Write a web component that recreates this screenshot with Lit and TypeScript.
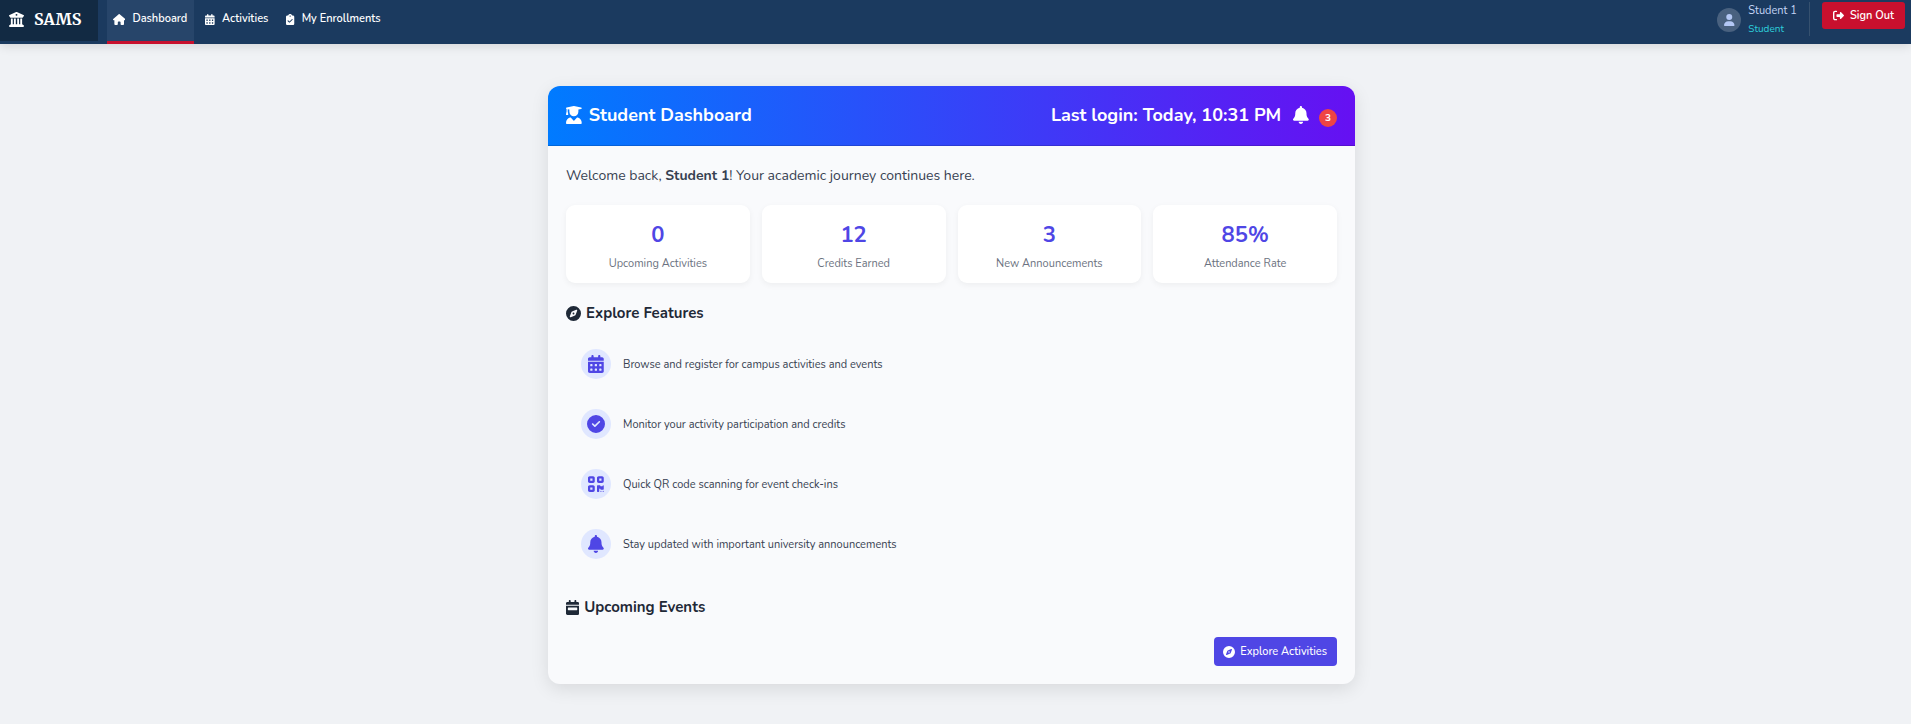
import { LitElement, html, css, svg } from "lit";
import { customElement, property } from "lit/decorators.js";

const ICONS: Record<string, [number, string]> = {
  university: [512, "M243.4 2.6l-224 96c-14 6-21.8 21-18.7 35.8S16.8 160 32 160v8c0 13.3 10.7 24 24 24H456c13.3 0 24-10.7 24-24v-8c15.2 0 28.3-10.7 31.3-25.6s-4.8-29.9-18.7-35.8l-224-96c-8-3.4-17.2-3.4-25.2 0zM128 224H64V420.3c-.6 .3-1.2 .7-1.8 1.1l-48 32c-11.7 7.8-17 22.4-12.9 35.9S17.9 512 32 512H480c14.1 0 26.5-9.2 30.6-22.7s-1.1-28.1-12.9-35.9l-48-32c-.6-.4-1.2-.7-1.8-1.1V224H384V416H344V224H280V416H232V224H168V416H128V224zM256 64a32 32 0 1 1 0 64 32 32 0 1 1 0-64z"],
  home: [576, "M575.8 255.5c0 18-15 32.1-32 32.1h-32l.7 160.2c0 2.7-.2 5.4-.5 8.1V472c0 22.1-17.9 40-40 40H456c-1.1 0-2.2 0-3.3-.1c-1.4 .1-2.8 .1-4.2 .1H416 392c-22.1 0-40-17.9-40-40V448 384c0-17.7-14.3-32-32-32H256c-17.7 0-32 14.3-32 32v64 24c0 22.1-17.9 40-40 40H160 128.1c-1.5 0-3-.1-4.5-.2c-1.2 .1-2.4 .2-3.6 .2H104c-22.1 0-40-17.9-40-40V360c0-.9 0-1.9 .1-2.8V287.6H32c-18 0-32-14-32-32.1c0-9 3-17 10-24L266.4 8c7-7 15-8 22-8s15 2 21 7L564.8 231.5c8 7 12 15 11 24z"],
  calendar: [448, "M128 0c17.7 0 32 14.3 32 32V64H288V32c0-17.7 14.3-32 32-32s32 14.3 32 32V64h48c26.5 0 48 21.5 48 48v48H0V112C0 85.5 21.5 64 48 64H96V32c0-17.7 14.3-32 32-32zM0 192H448V464c0 26.5-21.5 48-48 48H48c-26.5 0-48-21.5-48-48V192zm64 80v32c0 8.8 7.2 16 16 16h32c8.8 0 16-7.2 16-16V272c0-8.8-7.2-16-16-16H80c-8.8 0-16 7.2-16 16zm128 0v32c0 8.8 7.2 16 16 16h32c8.8 0 16-7.2 16-16V272c0-8.8-7.2-16-16-16H208c-8.8 0-16 7.2-16 16zm144-16c-8.8 0-16 7.2-16 16v32c0 8.8 7.2 16 16 16h32c8.8 0 16-7.2 16-16V272c0-8.8-7.2-16-16-16H336zM64 400v32c0 8.8 7.2 16 16 16h32c8.8 0 16-7.2 16-16V400c0-8.8-7.2-16-16-16H80c-8.8 0-16 7.2-16 16zm144-16c-8.8 0-16 7.2-16 16v32c0 8.8 7.2 16 16 16h32c8.8 0 16-7.2 16-16V400c0-8.8-7.2-16-16-16H208zm112 16v32c0 8.8 7.2 16 16 16h32c8.8 0 16-7.2 16-16V400c0-8.8-7.2-16-16-16H336c-8.8 0-16 7.2-16 16z"],
  week: [448, "M128 0c17.7 0 32 14.3 32 32V64H288V32c0-17.7 14.3-32 32-32s32 14.3 32 32V64h48c26.5 0 48 21.5 48 48v48H0V112C0 85.5 21.5 64 48 64H96V32c0-17.7 14.3-32 32-32zM0 192H448V464c0 26.5-21.5 48-48 48H48c-26.5 0-48-21.5-48-48V192zm80 64c-8.8 0-16 7.2-16 16v64c0 8.8 7.2 16 16 16H368c8.8 0 16-7.2 16-16V272c0-8.8-7.2-16-16-16H80z"],
  clipboard: [384, "M192 0c-41.8 0-77.4 26.7-90.5 64H64C28.7 64 0 92.7 0 128V448c0 35.3 28.7 64 64 64H320c35.3 0 64-28.7 64-64V128c0-35.3-28.7-64-64-64H282.5C269.4 26.7 233.8 0 192 0zm0 64a32 32 0 1 1 0 64 32 32 0 1 1 0-64zM305 273L177 401c-9.4 9.4-24.6 9.4-33.9 0L79 337c-9.4-9.4-9.4-24.6 0-33.9s24.6-9.4 33.9 0l47 47L271 239c9.4-9.4 24.6-9.4 33.9 0s9.4 24.6 0 33.9z"],
  user: [448, "M224 256A128 128 0 1 0 224 0a128 128 0 1 0 0 256zm-45.7 48C79.8 304 0 383.8 0 482.3C0 498.7 13.3 512 29.7 512H418.3c16.4 0 29.7-13.3 29.7-29.7C448 383.8 368.2 304 269.7 304H178.3z"],
  signout: [512, "M377.9 105.9L500.7 228.7c7.2 7.2 11.3 17.1 11.3 27.3s-4.1 20.1-11.3 27.3L377.9 406.1c-6.4 6.4-15 9.9-24 9.9c-18.7 0-33.9-15.2-33.9-33.9l0-62.1-128 0c-17.7 0-32-14.3-32-32l0-64c0-17.7 14.3-32 32-32l128 0 0-62.1c0-18.7 15.2-33.9 33.9-33.9c9 0 17.6 3.6 24 9.9zM160 96L96 96c-17.7 0-32 14.3-32 32l0 256c0 17.7 14.3 32 32 32l64 0c17.7 0 32 14.3 32 32s-14.3 32-32 32l-64 0c-53 0-96-43-96-96L0 128C0 75 43 32 96 32l64 0c17.7 0 32 14.3 32 32s-14.3 32-32 32z"],
  graduate: [448, "M219.3 .5c3.1-.6 6.3-.6 9.4 0l200 40C439.9 42.7 448 52.6 448 64s-8.1 21.3-19.3 23.5L352 102.9V160c0 70.7-57.3 128-128 128s-128-57.3-128-128V102.9L48 93.3v65.1l15.7 78.4c.9 4.7-.3 9.6-3.3 13.3s-7.6 5.9-12.4 5.9H16c-4.8 0-9.3-2.1-12.4-5.9s-4.3-8.6-3.3-13.3L16 158.4V86.6C6.5 83.3 0 74.3 0 64C0 52.6 8.1 42.7 19.3 40.5l200-40zM111.9 327.7c10.5-3.4 21.8 .4 29.4 8.5l71 75.5c6.3 6.7 17 6.7 23.3 0l71-75.5c7.6-8.1 18.9-11.9 29.4-8.5C401 348.6 448 409.4 448 481.3c0 17-13.8 30.7-30.7 30.7H30.7C13.8 512 0 498.2 0 481.3c0-71.9 47-132.7 111.9-153.6z"],
  bell: [448, "M224 0c-17.7 0-32 14.3-32 32V51.2C119 66 64 130.6 64 208v18.8c0 47-17.3 92.4-48.5 127.6l-7.4 8.3c-8.4 9.4-10.4 22.9-5.3 34.4S19.4 416 32 416H416c12.6 0 24-7.4 29.2-18.9s3.1-25-5.3-34.4l-7.4-8.3C401.3 319.2 384 273.9 384 226.8V208c0-77.4-55-142-128-156.8V32c0-17.7-14.3-32-32-32zm45.3 493.3c12-12 18.7-28.3 18.7-45.3H224 160c0 17 6.7 33.3 18.7 45.3s28.3 18.7 45.3 18.7s33.3-6.7 45.3-18.7z"],
  check: [512, "M256 512A256 256 0 1 0 256 0a256 256 0 1 0 0 512zM369 209L241 337c-9.4 9.4-24.6 9.4-33.9 0l-64-64c-9.4-9.4-9.4-24.6 0-33.9s24.6-9.4 33.9 0l47 47L335 175c9.4-9.4 24.6-9.4 33.9 0s9.4 24.6 0 33.9z"],
  qrcode: [448, "M0 80C0 53.5 21.5 32 48 32h96c26.5 0 48 21.5 48 48v96c0 26.5-21.5 48-48 48H48c-26.5 0-48-21.5-48-48V80zM64 96v64h64V96H64zM0 336c0-26.5 21.5-48 48-48h96c26.5 0 48 21.5 48 48v96c0 26.5-21.5 48-48 48H48c-26.5 0-48-21.5-48-48V336zm64 16v64h64V352H64zM304 32h96c26.5 0 48 21.5 48 48v96c0 26.5-21.5 48-48 48H304c-26.5 0-48-21.5-48-48V80c0-26.5 21.5-48 48-48zm80 64H320v64h64V96zM256 304c0-8.8 7.2-16 16-16h64c8.8 0 16 7.2 16 16s7.2 16 16 16h32c8.8 0 16-7.2 16-16s7.2-16 16-16s16 7.2 16 16v96c0 8.8-7.2 16-16 16H368c-8.8 0-16-7.2-16-16s-7.2-16-16-16s-16 7.2-16 16v64c0 8.8-7.2 16-16 16H272c-8.8 0-16-7.2-16-16V304zM368 480a16 16 0 1 1 0-32 16 16 0 1 1 0 32zm64 0a16 16 0 1 1 0-32 16 16 0 1 1 0 32z"],
  compass: [512, "M256 512A256 256 0 1 0 256 0a256 256 0 1 0 0 512zm50.7-186.9L162.4 380.6c-19.4 7.5-38.5-11.6-31-31l55.5-144.3c3.3-8.5 9.9-15.1 18.4-18.4l144.3-55.5c19.4-7.5 38.5 11.6 31 31L325.1 306.7c-3.2 8.5-9.9 15.1-18.4 18.4zM288 256a32 32 0 1 0 -64 0 32 32 0 1 0 64 0z"],
};

@customElement("app-icon")
export class AppIcon extends LitElement {
  @property() name = "";

  static styles = css`
    :host { display: inline-flex; flex: none; }
    .glyph { display: block; height: 1em; width: auto; fill: currentColor; }
  `;

  render() {
    const [width, path] = ICONS[this.name];
    return html`<svg class="glyph" viewBox="0 0 ${width} 512" aria-hidden="true">${svg`<path d=${path}></path>`}</svg>`;
  }
}

@customElement("app-navbar")
export class AppNavbar extends LitElement {
  static styles = css`
    :host { display: block; }
    .bar {
      display: flex; align-items: flex-start; height: 44px; padding-right: 6px;
      background: #1b3a5f; color: #fff; font-size: 11px; line-height: 16px;
      box-shadow: 0 2px 10px rgba(0, 0, 0, 0.12);
    }
    a { color: inherit; text-decoration: none; }
    .brand {
      display: flex; align-items: center; gap: 10px; height: 41px; box-sizing: border-box;
      min-width: 98px; padding: 0 9px 3px; background: #122a43;
      font: 700 16px/24px Merriweather, "DejaVu Serif Condensed", "DejaVu Serif", serif;
    }
    .brand app-icon { font-size: 15px; }
    .links { display: flex; flex: 1; gap: 5px; margin: 0 0 0 9px; padding: 0; list-style: none; }
    .link {
      display: flex; align-items: center; gap: 7px; height: 44px; box-sizing: border-box;
      padding: 0 7px 3px 6px; border-bottom: 3px solid transparent; font-weight: 600;
    }
    .link.active { background: #27456a; border-bottom-color: #c8102e; }
    .user { display: flex; align-items: center; gap: 7px; height: 34px; margin-top: 2px; padding-right: 12px; border-right: 1px solid #36516f; }
    .avatar {
      display: grid; place-items: center; width: 24px; height: 24px; margin-top: 2px; border-radius: 50%;
      background: #49617f; color: #b4c8f5; font-size: 12px;
    }
    .who { display: flex; flex-direction: column; gap: 3px; }
    .name { color: #c3d4f5; }
    .role { color: #2dd0dc; font-size: 10px; line-height: 14px; }
    .signout {
      display: flex; align-items: center; gap: 6px; height: 27px; margin: 2px 0 0 12px; padding: 0 11px;
      border: 0; border-radius: 3px; background: #c8102e; color: #fff; font: inherit; font-weight: 600;
    }
  `;

  render() {
    return html`
      <nav class="bar" aria-label="Main">
        <a class="brand" href="#"><app-icon name="university"></app-icon>SAMS</a>
        <ul class="links">
          <li><a class="link active" href="#" aria-current="page"><app-icon name="home"></app-icon>Dashboard</a></li>
          <li><a class="link" href="#"><app-icon name="calendar"></app-icon>Activities</a></li>
          <li><a class="link" href="#"><app-icon name="clipboard"></app-icon>My Enrollments</a></li>
        </ul>
        <div class="user">
          <span class="avatar"><app-icon name="user"></app-icon></span>
          <span class="who"><span class="name">Student 1</span><span class="role">Student</span></span>
        </div>
        <button class="signout" type="button"><app-icon name="signout"></app-icon>Sign Out</button>
      </nav>
    `;
  }
}

@customElement("app-root")
export class AppRoot extends LitElement {
  private stats = [
    { value: "0", label: "Upcoming Activities" },
    { value: "12", label: "Credits Earned" },
    { value: "3", label: "New Announcements" },
    { value: "85%", label: "Attendance Rate" },
  ];

  private features = [
    { icon: "calendar", text: "Browse and register for campus activities and events" },
    { icon: "check", text: "Monitor your activity participation and credits" },
    { icon: "qrcode", text: "Quick QR code scanning for event check-ins" },
    { icon: "bell", text: "Stay updated with important university announcements" },
  ];

  static styles = css`
    :host {
      display: block; min-height: 100vh; background: #f0f2f5; color: #374151;
      font-family: Nunito, Lato, "Open Sans", sans-serif; font-size: 11px; line-height: 16px;
    }
    .page { padding: 42px 8px 40px 0; }
    .card {
      max-width: 807px; margin: 0 auto; border-radius: 12px; overflow: hidden; background: #f9fafc;
      box-shadow: 0 5px 18px rgba(0, 0, 0, 0.1);
    }
    .head {
      display: flex; align-items: center; justify-content: space-between; height: 60px; box-sizing: border-box;
      padding: 0 18px 1px; border-bottom: 1px solid rgba(0, 0, 0, 0.15); color: #fff;
      background: linear-gradient(90deg, #007bff, #6610f2) border-box;
      font-size: 18px; line-height: 24px; font-weight: 700;
    }
    h1, h2, p, ul { margin: 0; padding: 0; }
    .title { display: flex; align-items: center; gap: 7px; font: inherit; }
    .login { display: flex; align-items: center; gap: 12px; }
    .alerts { display: flex; align-items: center; gap: 10px; }
    .badge {
      display: grid; place-items: center; width: 18px; height: 18px; margin-top: 6px; border-radius: 50%;
      background: #ef4444; font-size: 10px; line-height: 12px;
    }
    .body { display: flex; flex-direction: column; padding: 19px 18px 18px; }
    .welcome { font-size: 14px; line-height: 22px; margin-bottom: 18px; }
    .stats { display: grid; grid-template-columns: repeat(4, 1fr); gap: 12px; margin-bottom: 20px; }
    .stat {
      display: flex; flex-direction: column; gap: 7px; padding: 16px 12px 11px; border-radius: 9px; background: #fff;
      text-align: center; box-shadow: 0 2px 6px rgba(0, 0, 0, 0.05);
    }
    .value { color: #4f46e5; font-size: 22px; line-height: 28px; font-weight: 700; }
    .label { color: #6b7280; }
    .section { display: flex; align-items: center; gap: 5px; color: #1f2937; font-size: 15px; line-height: 20px; font-weight: 700; }
    .features { list-style: none; margin: 11px 0 23px; }
    .feature { display: flex; align-items: center; gap: 12px; height: 60px; padding-left: 15px; }
    .text { padding-top: 2px; }
    .round {
      display: grid; place-items: center; width: 30px; height: 30px; border-radius: 50%;
      background: #e0e7ff; color: #4f46e5; font-size: 18px;
    }
    .explore {
      display: flex; align-items: center; gap: 5px; align-self: flex-end; height: 29px; margin-top: 20px; padding: 0 10px 0 9px;
      border-radius: 4px; background: #4f46e5; color: #fff; text-decoration: none; font-weight: 500;
    }
    .explore app-icon { font-size: 12px; }
  `;

  render() {
    return html`
      <app-navbar></app-navbar>
      <main class="page">
        <article class="card">
          <header class="head">
            <h1 class="title"><app-icon name="graduate"></app-icon>Student Dashboard</h1>
            <div class="login">
              <span>Last login: Today, 10:31 PM</span>
              <span class="alerts"><app-icon name="bell"></app-icon><span class="badge">3</span></span>
            </div>
          </header>
          <div class="body">
            <p class="welcome">Welcome back, <strong>Student 1</strong>! Your academic journey continues here.</p>
            <section class="stats">
              ${this.stats.map((s) => html`<div class="stat"><span class="value">${s.value}</span><span class="label">${s.label}</span></div>`)}
            </section>
            <h2 class="section"><app-icon name="compass"></app-icon>Explore Features</h2>
            <ul class="features">
              ${this.features.map((f) => html`<li class="feature"><span class="round"><app-icon name=${f.icon}></app-icon></span><span class="text">${f.text}</span></li>`)}
            </ul>
            <h2 class="section"><app-icon name="week"></app-icon>Upcoming Events</h2>
            <a class="explore" href="#"><app-icon name="compass"></app-icon>Explore Activities</a>
          </div>
        </article>
      </main>
    `;
  }
}
